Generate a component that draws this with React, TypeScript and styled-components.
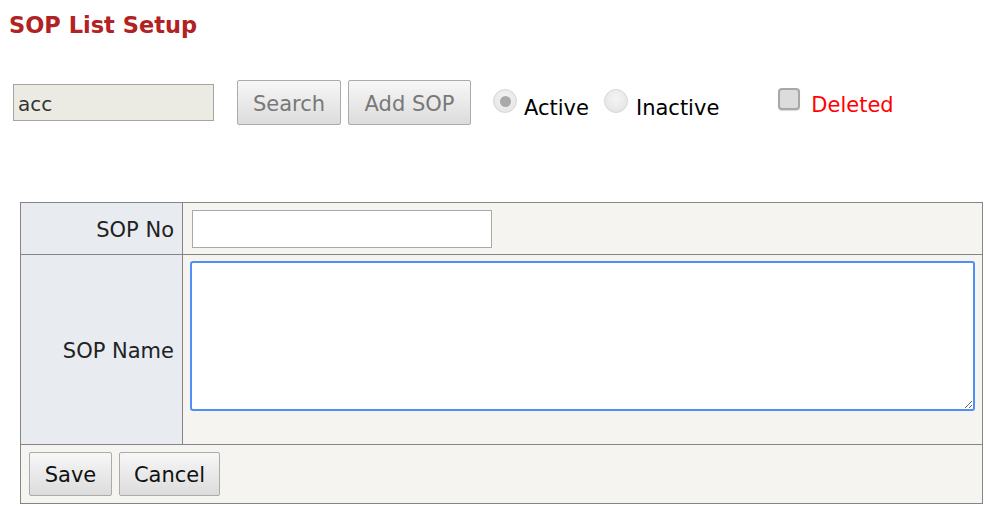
import React from "react";
import styled, { createGlobalStyle } from "styled-components";

const Global = createGlobalStyle`
  html, body { margin: 0; padding: 0; background: #ffffff; }
  body { padding: 8px; font-family: "DejaVu Sans", Verdana, sans-serif; }
  * { box-sizing: border-box; }
`;

const Title = styled.h1`
  margin: 0;
  padding: 0 0 0 1px;
  height: 32px;
  line-height: 34px;
  font-size: 22.5px;
  font-weight: bold;
  color: #b22222;
`;

const Toolbar = styled.div`
  display: flex;
  align-items: center;
  height: 45px;
  margin-top: 40px;
  padding-left: 5px;
`;

const SearchBox = styled.input`
  width: 201px;
  height: 37px;
  border: 1px solid #a4a4a4;
  background: #ebeae3;
  font-family: inherit;
  font-size: 20px;
  color: #333;
  padding: 2px 4px 0;
  outline: none;
  margin-right: 23px;
`;

const Button = styled.button<{ $muted?: boolean; $w: number }>`
  width: ${(p) => p.$w}px;
  height: ${(p) => (p.$muted ? 45 : 44)}px;
  border: 1px solid #ababab;
  border-radius: 2px;
  background: linear-gradient(#f7f7f7, #dcdcdc);
  font-family: inherit;
  font-size: 21px;
  color: ${(p) => (p.$muted ? "#787878" : "#111")};
  padding: 2px 0 0;
  margin-right: 7px;
  cursor: pointer;
`;

const Option = styled.label<{ $gapBefore: number }>`
  display: flex;
  align-items: center;
  margin-left: ${(p) => p.$gapBefore}px;
  font-size: 21px;
`;

const Radio = styled.span<{ $checked?: boolean }>`
  width: 24px;
  height: 24px;
  border-radius: 50%;
  border: 1px solid #d6d6d6;
  background: radial-gradient(circle at 50% 40%, #f4f4f4, #e2e2e2);
  display: flex;
  align-items: center;
  justify-content: center;
  margin-right: ${(p) => (p.$checked ? 7 : 8)}px;
  margin-top: -3px;
  &::after {
    content: "";
    display: ${(p) => (p.$checked ? "block" : "none")};
    width: 11px;
    height: 11px;
    border-radius: 50%;
    background: #a9a9a9;
  }
`;

const Check = styled.span`
  width: 22px;
  height: 22px;
  border-radius: 4px;
  border: 2px solid #a8a8a8;
  background: #dcdcdc;
  box-shadow: 0 1px 1px rgba(0, 0, 0, 0.15);
  margin-right: 11px;
  margin-top: -8px;
`;

const OptionText = styled.span<{ $color?: string }>`
  color: ${(p) => p.$color || "#000"};
  margin-top: ${(p) => (p.$color ? "4px" : "10px")};
`;

const Table = styled.table`
  margin: 77px 0 0 12px;
  width: 963px;
  border-collapse: collapse;
  border: 1px solid #858585;
  font-size: 21px;
`;

const Row = styled.tr<{ $h: number }>`
  height: ${(p) => p.$h}px;
`;

const LabelCell = styled.td`
  width: 163px;
  background: #e8ebf0;
  border: 1px solid #858585;
  text-align: right;
  padding: 2px 8px 0 0;
  color: #222;
  vertical-align: middle;
`;

const ValueCell = styled.td`
  background: #f5f4f0;
  border: 1px solid #858585;
  padding: 0 0 0 8px;
  vertical-align: middle;
`;

const FooterCell = styled.td`
  background: #f5f4f0;
  border: 1px solid #858585;
  padding: 0 0 0 8px;
  vertical-align: middle;
`;

const FooterButtons = styled.div`
  display: flex;
  align-items: center;
`;

const TextInput = styled.input`
  display: block;
  width: 300px;
  height: 38px;
  border: 1px solid #a9a9a9;
  background: #fff;
  font-family: inherit;
  font-size: 20px;
  outline: none;
  margin-left: 1px;
`;

const NameCell = styled(ValueCell)`
  vertical-align: top;
  padding: 6px 7px 0 7px;
`;

const TextArea = styled.textarea`
  display: block;
  width: 785px;
  height: 150px;
  border: 2px solid #4f8ff7;
  border-radius: 3px;
  background: #fff;
  font-family: inherit;
  font-size: 20px;
  outline: none;
  resize: both;
`;

export default function App() {
  return (
    <>
      <Global />
      <Title>SOP List Setup</Title>
      <Toolbar>
        <SearchBox defaultValue="acc" />
        <Button $muted $w={104}>Search</Button>
        <Button $muted $w={123}>Add SOP</Button>
        <Option $gapBefore={15}>
          <Radio $checked />
          <OptionText>Active</OptionText>
        </Option>
        <Option $gapBefore={15}>
          <Radio />
          <OptionText>Inactive</OptionText>
        </Option>
        <Option $gapBefore={59}>
          <Check />
          <OptionText $color="#ff0000">Deleted</OptionText>
        </Option>
      </Toolbar>
      <Table>
        <tbody>
          <Row $h={52}>
            <LabelCell>SOP No</LabelCell>
            <ValueCell>
              <TextInput />
            </ValueCell>
          </Row>
          <Row $h={190}>
            <LabelCell>SOP Name</LabelCell>
            <NameCell>
              <TextArea />
            </NameCell>
          </Row>
          <Row $h={59}>
            <FooterCell colSpan={2}>
              <FooterButtons>
                <Button $w={83}>Save</Button>
                <Button $w={101}>Cancel</Button>
              </FooterButtons>
            </FooterCell>
          </Row>
        </tbody>
      </Table>
    </>
  );
}
